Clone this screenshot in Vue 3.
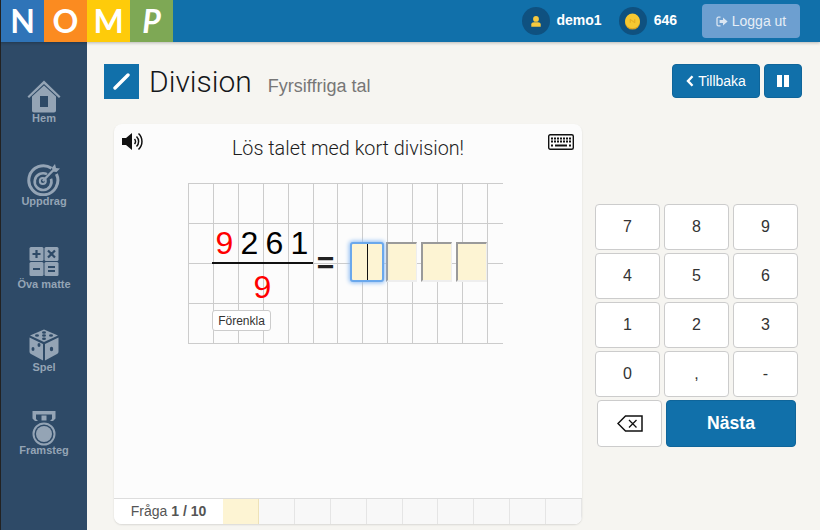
<script setup>
const navItems = [
  { label: 'Hem', icon: 'home' },
  { label: 'Uppdrag', icon: 'target' },
  { label: 'Öva matte', icon: 'calc' },
  { label: 'Spel', icon: 'dice' },
  { label: 'Framsteg', icon: 'medal' },
]
const logo = [
  { ch: 'N', cls: 'n' },
  { ch: 'O', cls: 'o' },
  { ch: 'M', cls: 'm' },
  { ch: 'P', cls: 'p' },
]
const cells = []
for (let r = 1; r <= 4; r++) for (let c = 1; c <= 13; c++) cells.push({ r, c })
const digits = [
  { v: '9', red: true },
  { v: '2' },
  { v: '6' },
  { v: '1' },
]
const keys = ['7', '8', '9', '4', '5', '6', '1', '2', '3', '0', ',', '-']
</script>

<template>
  <div class="app">
    <header class="top">
      <div class="logo">
        <span v-for="l in logo" :key="l.ch" class="tile" :class="l.cls"><span class="letter">{{ l.ch }}</span></span>
      </div>
      <div class="user">
        <span class="badge">
          <svg width="12" height="13" viewBox="0 0 14 14"><circle cx="7" cy="4" r="3.4" fill="#f7c93e"/><path d="M1.500 13V10.500C1.500 8.800 3 7.800 4.600 7.800H9.400C11 7.800 12.500 8.800 12.500 10.500V13Z" fill="#f7c93e"/></svg>
        </span>
        <b class="u-name">demo1</b>
        <span class="badge coin-badge">
          <svg width="17" height="17" viewBox="0 0 18 18"><circle cx="9" cy="9.600" r="8" fill="#dca321"/><circle cx="9" cy="8.400" r="7.800" fill="#f7c831"/><path d="M6.600 10.400V6.600L11.400 10.400V6.600" fill="none" stroke="#e3a91e" stroke-width="1"/></svg>
        </span>
        <b class="u-coins">646</b>
        <button class="logout">
          <svg width="12" height="11" viewBox="0 0 12 11"><path d="M4.500 1.200H2.400C1.600 1.200 1 1.800 1 2.600V8.400C1 9.200 1.600 9.800 2.400 9.800H4.500" fill="none" stroke="#dbe6f2" stroke-width="1.300"/><path d="M3.600 3.900H7V1.400L11.600 5.500 7 9.600V7.100H3.600Z" fill="#dbe6f2"/></svg>
          Logga ut
        </button>
      </div>
    </header>

    <div class="body">
      <nav class="side">
        <div v-for="n in navItems" :key="n.label" class="nav-item">
          <div class="nav-icon">
            <svg v-if="n.icon === 'home'" width="34" height="33" viewBox="0 0 34 33"><path d="M17 0.500 33.500 16.500 32 18 17 4 2 18 0.500 16.500Z" fill="#94a4b5"/><path fill-rule="evenodd" d="M17 5.500 29 16.500V30.500C29 31.600 28.200 32.500 27 32.500H7C5.800 32.500 5 31.600 5 30.500V16.500ZM13 16V27H21V16Z" fill="#94a4b5"/></svg>
            <svg v-else-if="n.icon === 'target'" width="34" height="33" viewBox="0 0 34 33" fill="none" stroke="#94a4b5"><path d="M24.500 5.300A14.500 14.500 0 1 0 29.400 11" stroke-width="3"/><path d="M20 11.200A8.400 8.400 0 1 0 24 15.800" stroke-width="2.600"/><circle cx="15.800" cy="18" r="3" stroke-width="2"/><path d="M15.800 18 26 7.500" stroke-width="2.400"/><path d="M25 4.500 28 1 29 5 33 5.500 29.500 9 25.500 8.500Z" fill="#94a4b5" stroke="none"/></svg>
            <svg v-else-if="n.icon === 'calc'" width="30" height="30" viewBox="0 0 30 30"><rect x="0.500" width="14" height="14" rx="1.500" fill="#94a4b5"/><rect x="15.500" width="14" height="14" rx="1.500" fill="#94a4b5"/><rect x="0.500" y="15" width="14" height="14" rx="1.500" fill="#94a4b5"/><rect x="15.500" y="15" width="14" height="14" rx="1.500" fill="#94a4b5"/><path d="M3.500 7H11.500M7.500 3V11M4 22H11M19 3.500 26 10.500M26 3.500 19 10.500M19 20H26M19 24H26" stroke="#2e4a67" stroke-width="2.200"/></svg>
            <svg v-else-if="n.icon === 'dice'" width="32" height="32" viewBox="0 0 32 32"><path d="M16 0.500 30 6.500 16 13 2 6.500Z" fill="#94a4b5"/><path d="M1.500 8.500 15 15V31.500L3 25C2 24.500 1.500 23.500 1.500 22.500Z" fill="#94a4b5"/><path d="M30.500 8.500 17 15V31.500L29 25C30 24.500 30.500 23.500 30.500 22.500Z" fill="#94a4b5"/><g fill="#2e4a67"><ellipse cx="16" cy="3.500" rx="2" ry="1.200"/><ellipse cx="9" cy="6.500" rx="2" ry="1.200"/><ellipse cx="16" cy="6.500" rx="2" ry="1.200"/><ellipse cx="23" cy="6.500" rx="2" ry="1.200"/><ellipse cx="16" cy="9.800" rx="2" ry="1.200"/><ellipse cx="5" cy="20" rx="1.500" ry="2"/><ellipse cx="11" cy="16" rx="1.500" ry="2"/><ellipse cx="23.500" cy="20" rx="1.700" ry="2.200"/></g></svg>
            <svg v-else width="24" height="35" viewBox="0 0 24 35"><path d="M0.500 0H23.500V3.500H0.500ZM0.500 3.500H4V8L6 10H3L0.500 7.500ZM23.500 3.500H20V8L18 10H21L23.500 7.500ZM9.500 4.500H14.500V9.500H9.500Z" fill="#94a4b5"/><circle cx="12" cy="23" r="10.500" fill="none" stroke="#94a4b5" stroke-width="2"/><circle cx="12" cy="23" r="8" fill="#94a4b5"/></svg>
          </div>
          <span>{{ n.label }}</span>
        </div>
      </nav>

      <main class="main">
        <div class="title-row">
          <span class="title-icon">
            <svg width="17" height="17" viewBox="0 0 17 17"><path d="M2 15 15 2" stroke="#fff" stroke-width="3.400" stroke-linecap="round"/></svg>
          </span>
          <h1>Division</h1>
          <span class="sub">Fyrsiffriga tal</span>
          <div class="title-actions">
            <button class="btn back">
              <svg width="8" height="12" viewBox="0 0 8 12"><path d="M6.500 1.200 2 6 6.500 10.800" fill="none" stroke="#fff" stroke-width="2.400"/></svg>
              Tillbaka
            </button>
            <button class="btn pause">
              <svg width="12" height="12" viewBox="0 0 12 12"><path d="M0 0H5V12H0ZM7 0H12V12H7Z" fill="#fff"/></svg>
            </button>
          </div>
        </div>

        <div class="work">
          <section class="card">
            <div class="card-head">
              <svg class="speaker" width="23" height="19" viewBox="0 0 23 19"><path d="M0 6H4L10 1V18L4 13H0Z" fill="#111"/><g fill="none" stroke="#111" stroke-width="1.500"><path d="M12.500 7A3.500 3.500 0 0 1 12.500 12"/><path d="M14.500 4.500A7 7 0 0 1 14.500 14.500"/><path d="M16.500 1.500A11 11 0 0 1 16.500 17.500"/></g></svg>
              <h2>Lös talet med kort division!</h2>
              <svg class="kbd" width="26" height="16" viewBox="0 0 26 16"><rect x="0.700" y="0.700" width="24.600" height="14.600" rx="1.500" fill="none" stroke="#111" stroke-width="1.400"/><path d="M3 4.500H23M3 7.500H23" stroke="#111" stroke-width="1.800" stroke-dasharray="2 1"/><path d="M3 11.500H5M7 11.500H19M21 11.500H23" stroke="#111" stroke-width="1.800"/></svg>
            </div>

            <div class="sheet">
              <i v-for="cell in cells" :key="cell.r + '-' + cell.c" class="cell" :style="{ gridRow: cell.r, gridColumn: cell.c }"></i>
              <div class="fraction">
                <div class="numer">
                  <span v-for="(d, i) in digits" :key="i" :class="{ red: d.red }">{{ d.v }}</span>
                </div>
                <div class="denom red">9</div>
              </div>
              <div class="equals">=</div>
              <div class="answers">
                <span class="box focus"><i class="caret"></i></span>
                <span class="box"></span>
                <span class="box"></span>
                <span class="box"></span>
              </div>
              <button class="simplify">Förenkla</button>
            </div>

            <div class="progress">
              <div class="p-label">Fråga <b>1 / 10</b></div>
              <i v-for="n in 10" :key="n" class="p-cell" :class="{ now: n === 1 }"></i>
            </div>
          </section>

          <aside class="pad">
            <div class="keys">
              <button v-for="k in keys" :key="k" class="key">{{ k }}</button>
            </div>
            <div class="pad-bottom">
              <button class="key erase">
                <svg width="26" height="17" viewBox="0 0 26 17"><path d="M25 1V16H8.500L1 8.500 8.500 1Z" fill="none" stroke="#111" stroke-width="1.500"/><path d="M12 5 19.500 12.500M19.500 5 12 12.500" stroke="#111" stroke-width="1.300"/></svg>
              </button>
              <button class="next">Nästa</button>
            </div>
          </aside>
        </div>
      </main>
    </div>
  </div>
</template>

<style>
html, body { margin: 0; overflow: hidden; }
</style>

<style scoped>
.app {
  width: 820px;
  height: 530px;
  overflow: hidden;
  background: #f6f5f1;
  font-family: "Liberation Sans", Arial, sans-serif;
  display: flex;
  flex-direction: column;
}
button { font-family: inherit; cursor: pointer; }

.top {
  height: 42px;
  flex: none;
  background: #1170aa;
  display: flex;
  justify-content: space-between;
  box-shadow: 0 1px 3px rgba(0,0,0,.25);
  position: relative;
  z-index: 2;
  border-left: 1px solid #222;
  box-sizing: border-box;
}
.logo { display: flex; }
.tile {
  width: 43px;
  height: 42px;
  display: flex;
  align-items: center;
  justify-content: center;
}
.letter {
  color: #fff;
  font-family: Lato, "Liberation Sans", sans-serif;
  font-weight: 700;
  font-size: 32px;
  line-height: 1;
}
.n { background: #2f74b8; }
.o { background: #fb8b20; }
.m { background: #fecb0a; }
.p { background: #7ea855; }
.p .letter { font-style: italic; }

.user { display: flex; align-items: center; padding-right: 20px; }
.badge {
  width: 28px;
  height: 28px;
  border-radius: 50%;
  background: #0f5180;
  display: flex;
  align-items: center;
  justify-content: center;
}
.user b { color: #fff; font-size: 14px; margin-top: -2px; }
.u-name { margin-left: 7px; }
.coin-badge { margin-left: 17px; }
.u-coins { margin-left: 7px; }
.logout {
  margin-left: 25px;
  width: 98px;
  height: 34px;
  border: 0;
  border-radius: 4px;
  background: #6d9fd0;
  color: #e6eef6;
  font-size: 14px;
  display: flex;
  align-items: center;
  justify-content: center;
  gap: 4px;
  padding: 0;
}

.body { flex: 1; display: flex; min-height: 0; border-left: 1px solid #222; }
.side {
  width: 86px;
  flex: none;
  background: #2e4a67;
  padding-top: 38px;
  box-sizing: border-box;
}
.nav-item {
  height: 83px;
  display: flex;
  flex-direction: column;
  align-items: center;
  color: #94a4b5;
  font-size: 11px;
  font-weight: 700;
}
.nav-icon {
  height: 32px;
  display: flex;
  align-items: center;
  justify-content: center;
}
.nav-icon svg { flex: none; }
.nav-item span { line-height: 13px; }

.main { flex: 1; padding: 22px 18px 0 17px; min-width: 0; }
.title-row { display: flex; align-items: flex-start; height: 35px; }
.title-icon {
  width: 35px;
  height: 35px;
  background: #1170aa;
  display: flex;
  align-items: center;
  justify-content: center;
  flex: none;
}
h1 {
  margin: 0 0 0 10px;
  font-family: Roboto, "Liberation Sans", sans-serif;
  font-weight: 300;
  font-size: 30px;
  line-height: 35px;
  color: #15171a;
}
.sub { margin: 12px 0 0 16px; font-size: 18px; line-height: 20px; color: #777; }
.title-actions { margin-left: auto; display: flex; gap: 4px; }
.btn {
  height: 34px;
  border: 1px solid #0f659a;
  border-radius: 4px;
  background: #1170aa;
  color: #fff;
  font-size: 14px;
  display: flex;
  align-items: center;
  justify-content: center;
  gap: 4px;
  padding: 0;
}
.back { width: 88px; }
.pause { width: 38px; }

.work { display: flex; margin-top: 25px; padding-left: 10px; align-items: flex-start; }
.card {
  width: 468px;
  height: 400px;
  background: #fcfcfc;
  border-radius: 8px;
  box-shadow: 0 1px 2px rgba(0,0,0,.12);
  position: relative;
  display: flex;
  flex-direction: column;
  overflow: hidden;
  flex: none;
}
.card-head {
  height: 59px;
  flex: none;
  display: flex;
  align-items: flex-start;
  padding: 8px 8px 0 8px;
  box-sizing: border-box;
}
.card-head h2 {
  flex: 1;
  margin: 5px 0 0;
  font-family: Roboto, "Liberation Sans", sans-serif;
  font-weight: 300;
  text-align: center;
  font-size: 19.800px;
  line-height: 24px;
  color: #1d1d1d;
  padding-left: 3px;
}
.kbd { margin-top: 2px; }

.sheet {
  display: grid;
  grid-template-columns: repeat(5, 25px) 24px repeat(6, 25px) 16px;
  grid-template-rows: repeat(3, 40px) 41px;
  margin-left: 74px;
  width: 315px;
  flex: none;
}
.cell { border-left: 1px solid #ccc; border-top: 1px solid #ccc; box-sizing: border-box; }
.cell:nth-last-of-type(-n+13) { border-bottom: 1px solid #ccc; }
.fraction {
  grid-row: 2 / 4;
  grid-column: 2 / 6;
  z-index: 1;
  margin-left: -1px;
}
.numer {
  display: flex;
  height: 40px;
  border-bottom: 2px solid #111;
  box-sizing: content-box;
  margin-top: -1px;
}
.numer span {
  width: 25px;
  text-align: center;
  font-size: 32px;
  line-height: 42px;
  color: #000;
}
.numer span.red, .red { color: #f00; }
.denom {
  text-align: center;
  font-size: 32px;
  line-height: 46px;
}
.equals {
  grid-row: 2 / 4;
  grid-column: 6;
  z-index: 1;
  align-self: center;
  text-align: center;
  font-size: 30px;
  font-weight: 700;
  line-height: 40px;
  color: #222;
  padding-left: 1px;
}
.answers {
  grid-row: 2 / 4;
  grid-column: 7 / 14;
  z-index: 1;
  display: flex;
  gap: 4px;
  margin: 19px 0 0 13px;
  align-items: flex-start;
}
.box {
  width: 31px;
  height: 40px;
  box-sizing: border-box;
  background: #fdf4d3;
  border-style: solid;
  border-width: 2px 1px 2px 2px;
  border-color: #9a9a9a #eee #eee #9a9a9a;
}
.box.focus {
  width: 34px;
  margin-right: -2px;
  border: 2px solid #6aa8ec;
  border-radius: 3px;
  box-shadow: 0 0 4px 1px #8dbcf3;
  position: relative;
}
.caret { position: absolute; left: 15px; top: 0; bottom: 0; width: 1px; background: #111; }
.simplify {
  grid-row: 4;
  grid-column: 2 / 6;
  z-index: 1;
  justify-self: start;
  align-self: start;
  margin: 7px 0 0 -1px;
  width: 59px;
  height: 21px;
  padding: 0;
  border: 1px solid #ccc;
  border-radius: 3px;
  background: #fff;
  color: #333;
  font-size: 12px;
}

.progress {
  margin-top: auto;
  height: 26px;
  flex: none;
  display: flex;
  border-top: 1px solid #ddd;
  box-sizing: border-box;
  background: #fff;
}
.p-label {
  width: 109px;
  flex: none;
  text-align: center;
  font-size: 14px;
  line-height: 25px;
  color: #555;
}
.p-cell {
  flex: 1;
  background: #f8f8f8;
  border-right: 1px solid #e5e5e5;
}
.p-cell.now { background: #fdf4d3; border-right-color: #eee2b8; }

.pad { margin: 80px 0 0 13px; width: 203px; }
.keys {
  display: grid;
  grid-template-columns: repeat(3, 65px);
  grid-auto-rows: 46px;
  gap: 3px 4px;
}
.key {
  border: 1px solid #ccc;
  border-radius: 4px;
  background: #fff;
  color: #333;
  font-size: 16px;
  padding: 0;
}
.pad-bottom { display: flex; gap: 4px; margin: 3px 0 0 2px; }
.erase { width: 65px; height: 47px; display: flex; align-items: center; justify-content: center; }
.next {
  width: 130px;
  height: 47px;
  border: 1px solid #0f659a;
  border-radius: 4px;
  background: #1170aa;
  color: #fff;
  font-size: 17.600px;
  font-weight: 700;
  padding: 0;
}
</style>
